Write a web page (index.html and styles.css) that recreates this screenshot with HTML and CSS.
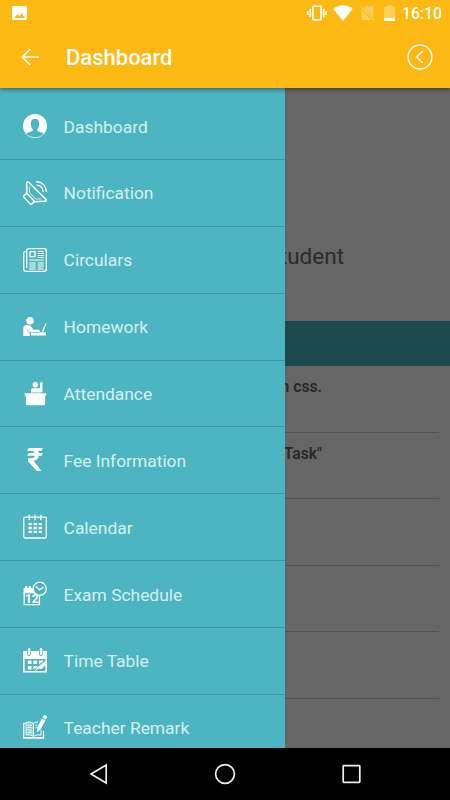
FILE: index.html
```html
<!DOCTYPE html>
<html lang="en">
<head>
  <meta charset="UTF-8">
  <meta name="viewport" content="width=device-width, initial-scale=1.0">
  <title>Dashboard</title>
  <link rel="stylesheet" href="styles.css">
</head>
<body>

  <header class="header">
    <div class="status-bar">
      <svg class="status-picture" width="15" height="14" viewBox="0 0 15 14"><path fill="#fff" fill-rule="evenodd" d="M1.5 0h12Q15 0 15 1.5v11Q15 14 13.5 14h-12Q0 14 0 12.500v-11Q0 0 1.500 0zM2 12h11L9.600 7.300 7.200 10.300 5.300 8.300z"/></svg>
      <div class="status-right">
        <svg class="vibrate" width="20" height="16" viewBox="0 0 20 16" fill="none" stroke="#fff" stroke-width="1.700"><rect x="5.900" y="1.200" width="8.200" height="13.600" rx="1"/><path d="M3.300 4v8M.8 6v4M16.700 4v8M19.200 6v4"/></svg>
        <svg class="wifi" width="20" height="16" viewBox="0 0 20 16"><path fill="#fff" d="M.3 4Q10-3.500 19.700 4L10 16z"/></svg>
        <svg class="no-sim" width="15" height="16" viewBox="0 0 15 16"><path fill="#fff" opacity=".3" d="M5 1h7q1.500 0 1.500 1.500v10L3.500 2.500zM1.500 5l10 10H3q-1.500 0-1.500-1.500z"/><path stroke="#fff" opacity=".3" stroke-width="1.300" d="M.5 1.500l14 14"/></svg>
        <svg class="battery" width="11" height="16" viewBox="0 0 11 16"><path fill="#fff" opacity=".3" d="M3.500 0h4v1.600H10q1 0 1 1V13H0V2.600q0-1 1-1h2.500z"/><path fill="#fff" d="M0 13h11v2q0 1-1 1H1q-1 0-1-1z"/></svg>
        <span class="clock">16:10</span>
      </div>
    </div>
    <div class="app-bar">
      <svg class="back" width="18" height="18" viewBox="0 0 18 18" fill="none" stroke="#fff" stroke-width="1.700"><path d="M18 9H1.500M9.300 1L1.300 9l8 8"/></svg>
      <h1 class="title">Dashboard</h1>
      <svg class="circle-back" width="26" height="26" viewBox="0 0 26 26" fill="none" stroke="#fff" stroke-width="1.500"><circle cx="13" cy="13" r="11.900"/><path d="M15.800 7L9.600 13l6.200 6"/></svg>
    </div>
  </header>

  <main class="main">
    <section class="content">
      <div class="profile">Student</div>
      <div class="band"></div>
      <ul class="tasks">
        <li class="task">Learn css.</li>
        <li class="task">"Task"</li>
        <li class="task"></li>
        <li class="task"></li>
        <li class="task"></li>
      </ul>
    </section>
    <div class="scrim"></div>

    <nav class="drawer">
      <a class="item">
        <svg class="icon" viewBox="0 0 24 24"><circle cx="12" cy="12" r="12" fill="#fff"/><path fill="#4db5c2" d="M12 4.700c3 0 4.300 2 4.100 5 0 3-1 4.300-1.900 5.700v1.400c2.500 1.300 5 1.500 6.600 2.900C18.500 22 15.500 23.300 12 23.300S5.500 22 3.200 19.700c1.600-1.400 4.100-1.600 6.600-2.900v-1.400C8.900 14 7.900 12.700 7.900 9.700 7.700 6.700 9 4.700 12 4.700z"/></svg>
        <span>Dashboard</span>
      </a>
      <a class="item">
        <svg class="icon line" viewBox="0 0 24 24"><path stroke-width="1.500" d="M3.700 12V1.800Q4.300.2 5.600 1.200L23 18.500q.6 1.800-1 1.800L11 20.700M3.700 12L.9 14.800q-.5.8 0 1.400l6.400 6.700q.8.600 1.500 0l2.700-2.500L4 12.200z"/><path stroke-width=".8" d="M6.300 5.500v6l6.500 6.500h5.500"/><path d="M13 .7C19 .8 23.300 5 23.300 11M13.600 4.200c4 0 6.500 3 6.500 6.700"/></svg>
        <span>Notification</span>
      </a>
      <a class="item">
        <svg class="icon line" viewBox="0 0 24 24"><path d="M3.700 3.700H2.500Q.7 3.700.7 5.500V21q0 2.300 2.300 2.300h18q2.300 0 2.300-2.300V2.500Q23.300.7 21.500.7h-16Q3.700.7 3.700 2.500V20"/><path stroke-width="1.300" d="M7 3.700h5v5H7z"/><path stroke-width="1" d="M14.700 3.500h6M14.700 5.500h6M14.700 7.500h6M14.700 9.500h6M6.300 12h14.500M6.300 15h6.400M6.300 17h6.400M6.300 19h6.400M6.300 21h6.400M14.700 15h6M14.700 17h6M14.700 19h6M14.700 21h6"/></svg>
        <span>Circulars</span>
      </a>
      <a class="item">
        <svg class="icon" viewBox="0 0 24 24" fill="#fff"><circle cx="7" cy="5.800" r="3.800"/><path d="M.3 21v-8Q.5 10 4 10q3.800-.3 5 2.500l1 2 6 .2q1 .4.8 1.800l-.5.8H23v3.200H8V18l-1.300-1v4zM18.800 16.500l3.600-8h1.300l-3.300 8z"/><path fill="none" stroke="#4db5c2" stroke-width=".6" d="M4 14l1.200 3 4 .5h7"/></svg>
        <span>Homework</span>
      </a>
      <a class="item">
        <svg class="icon" viewBox="0 0 24 24" fill="#fff"><circle cx="12.300" cy="2.700" r="2.700"/><path d="M17 .2h2.500V9q0 1.500-1.700 1.500H8V8q0-1.700 1.700-1.700H17zM1.700 11.300h21.600v2.500h-1.200V22q0 1.300-1.300 1.300H4.200Q2.900 23.300 2.900 22v-8.200H1.700z"/></svg>
        <span>Attendance</span>
      </a>
      <a class="item">
        <svg class="icon" viewBox="0 0 24 24" fill="#fff"><path d="M5.500 0H20l-1.300 2.800h-4q1 1 1.300 2.300h4l-1.300 2.700h-2.800c-.5 3-2.500 4.700-5.300 5l7.800 10.200h-4.800L5 13.300v-3.100h3c2.200 0 3.700-.8 4.200-2.400H4.300l1.200-2.700h6.400Q11 2.900 8 2.900H4.300z"/></svg>
        <span>Fee Information</span>
      </a>
      <a class="item">
        <svg class="icon line" viewBox="0 0 24 24"><rect x=".7" y="2.200" width="22.600" height="20.800" rx="1.500"/><path d="M6.200-.3v5.500M12-.3v5.500M17.800-.3v5.500"/><path stroke-width="2.300" d="M5.500 9.200h3.300M10.500 9.200h3.300M15.600 9.200h3.300M5.500 13h3.300M10.500 13h3.300M15.600 13h3.300M5.500 16.900h3.300M10.500 16.900h3.300M15.600 16.900h3.300"/></svg>
        <span>Calendar</span>
      </a>
      <a class="item">
        <svg class="icon line" viewBox="0 0 24 24"><path fill="#fff" stroke="none" d="M.6 6h1.700V4.200h2V6h1.500V4.200h2V6h1.700l2.700 5.300H.6z"/><path stroke-width="1.300" d="M1.200 10v12.700h15.200V14"/><circle cx="16.700" cy="6.800" r="6.600"/><path d="M12.600 4.500l4 3.200 4-2.600"/><text class="icon-number" x="1.900" y="21">12</text></svg>
        <span>Exam Schedule</span>
      </a>
      <a class="item">
        <svg class="icon" viewBox="0 0 24 24" fill="#fff"><path fill-rule="evenodd" d="M0 2h4v3.500q2 3 4 0V2h8v3.500q2 3 4 0V2h4v21.500H0zM1.600 10v12h20.800V10z"/><rect x="4.800" y="-1" width="2.500" height="7" rx="1.200"/><rect x="16.800" y="-1" width="2.500" height="7" rx="1.200"/><path d="M4.800 11.500h3.700V15H4.800zM10.400 11.500h3.700V15h-3.700zM16 11.500h4v1.300L16 15zM4.800 17h3.700v3.500H4.800zM10.400 17h3.700v1.500l-3.700 2z"/><path d="M11 23.300l4-5.500 7.800-6v4l-4 4.300-3.500-.5z"/></svg>
        <span>Time Table</span>
      </a>
      <a class="item">
        <svg class="icon line" viewBox="0 0 24 24"><path stroke-width="1.300" d="M2.600 7.300H.7v14.800h19.800V15M1 21.600h19"/><path fill="#fff" fill-opacity=".35" stroke="none" d="M3 6.500q4-1.500 7.500.8v13Q7 18 3 19z"/><path stroke-width=".9" d="M3 19V6.500q4-1.500 7.500.8Q13 5.600 15 6.200M3 19q4-1 7.500 1.300 3.500-2 7.500-1.300v-5M10.500 7.300V20M4.500 9q2.200-.7 4.300.5M4.500 11.500q2.200-.7 4.300.5M4.500 14q2.200-.7 4.300.5M4.500 16.500q2.200-.7 4.300.5M12.300 9.500l2-.6M12.300 12l1.500-.5"/><path fill="#fff" stroke="none" d="M19.400 1.600l1.200-2.100q.6-.7 1.500-.2l1.700.9q.7.500.2 1.400l-1.200 2.200zM18.900 2.500l3.500 2-5 8.900-3.200 2.900.1-5z"/></svg>
        <span>Teacher Remark</span>
      </a>
    </nav>
  </main>

  <footer class="nav-bar">
    <svg width="20" height="22" viewBox="0 0 20 22"><path d="M18.200 2v18L3 11z"/></svg>
    <svg width="22" height="22" viewBox="0 0 22 22"><circle cx="11" cy="11" r="9.400"/></svg>
    <svg width="20" height="20" viewBox="0 0 20 20"><rect x="1.200" y="1.700" width="16.600" height="16.600" rx=".5"/></svg>
  </footer>

</body>
</html>
```
FILE: styles.css
```css
* {
  box-sizing: border-box;
}
body {
  margin: 0;
  height: 800px;
  display: flex;
  flex-direction: column;
  overflow: hidden;
  background: #000;
  font-family: Roboto, sans-serif;
}
svg {
  display: block;
  flex-shrink: 0;
}

/* status bar and title */
.header {
  height: 87.5px;
  background: #fdb913;
  color: #fff;
  z-index: 3;
  box-shadow: 0 1px 5px rgba(0,0,0,0.5);
}
.status-bar {
  height: 27px;
  display: flex;
  justify-content: space-between;
  padding: 0 9px 0 12px;
}
.status-picture {
  margin-top: 6px;
}
.status-right {
  display: flex;
  padding-top: 5px;
}
.wifi {
  margin-left: 6px;
}
.no-sim {
  margin-left: 7px;
}
.battery {
  margin-left: 9px;
}
.clock {
  margin-left: 7px;
  font-size: 15.7px;
  font-weight: 500;
  line-height: 18px;
  width: 39px;
}
.app-bar {
  height: 59px;
  display: flex;
  align-items: center;
  padding: 0 17px 0 21px;
}
.title {
  margin: 2px 0 0 27px;
  flex: 1;
  font-size: 22px;
  font-weight: 500;
}

/* page under the menu */
.main {
  position: relative;
  flex: 1;
  overflow: hidden;
  background: #fff;
}
.profile {
  height: 233.5px;
  padding: 154px 106px 0 0;
  text-align: right;
  font-size: 22.5px;
  line-height: 28px;
  color: #6c6c6c;
}
.band {
  height: 45px;
  background: #4db8c1;
}
.tasks {
  list-style: none;
  margin: 0;
  padding: 0 11px;
}
.task {
  height: 66.5px;
  border-bottom: 1px solid #c8c8c8;
  padding: 11px 117px 0 0;
  text-align: right;
  font-size: 15.7px;
  font-weight: 600;
  line-height: 19px;
  color: #666;
  white-space: nowrap;
}
.scrim {
  position: absolute;
  inset: 0;
  background: rgba(0,0,0,0.6);
}

/* slide-out menu */
.drawer {
  position: absolute;
  top: 0;
  left: 0;
  width: 284.5px;
  height: 100%;
  padding-top: 5.7px;
  overflow: hidden;
  background: #4db5c2;
}
.item {
  height: 66.86px;
  display: flex;
  align-items: center;
  padding-left: 23px;
  border-bottom: 1px solid #3f97a3;
  color: #d4f0f3;
  font-size: 17.4px;
}
.item span {
  margin: 1px 0 0 16.6px;
}
.icon {
  width: 24px;
  height: 24px;
  overflow: visible;
}
.line {
  fill: none;
  stroke: #fff;
  stroke-width: 1.3;
}
.icon-number {
  font: bold 12px Roboto, sans-serif;
  fill: #fff;
  stroke: none;
}

.nav-bar {
  height: 52px;
  background: #000;
  display: flex;
  align-items: center;
  justify-content: space-between;
  padding: 0 88px;
}
.nav-bar svg {
  fill: none;
  stroke: #eee;
  stroke-width: 1.7;
}
```
